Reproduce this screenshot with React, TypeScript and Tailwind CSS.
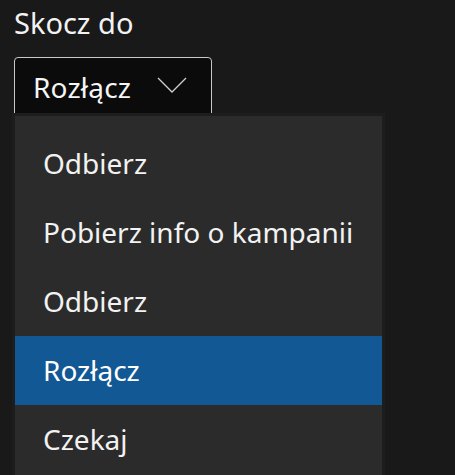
import React from "react";

const items = ["Odbierz", "Pobierz info o kampanii", "Odbierz", "Rozłącz", "Czekaj"];

function Chevron() {
  return (
    <svg width="30" height="16" viewBox="0 0 30 16" fill="none">
      <path d="M1 1 L15 15 L29 1" stroke="#d0d0d0" strokeWidth="1.3" />
    </svg>
  );
}

export default function App() {
  const selected = 3;
  return (
    <div
      className="w-[455px] h-[475px] bg-[#191919] text-white overflow-hidden relative"
      style={{ fontFamily: '"Noto Sans", "Open Sans", sans-serif' }}
    >
      <div className="pl-[14px] pt-[3px]">
        <p className="text-[29px] leading-[40px] text-[#f2f2f2]">Skocz do</p>
        <div className="mt-[14px] w-[198px] h-[70px] border border-[#c8c8c8] rounded-t-[4px] bg-[#0b0b0b] flex items-start pt-[10px] pl-[18px] gap-[26px]">
          <span className="text-[28px] leading-[38px] text-[#f5f5f5] tracking-[0.2px]">Rozłącz</span>
          <span className="mt-[9px]">
            <Chevron />
          </span>
        </div>
      </div>

      <div className="absolute left-[15px] top-[116px] w-[367px] h-[380px] bg-[#2b2b2b] pt-[13px] shadow-[0_0_0_3px_#1d1d1d]">
        {items.map((label, i) => (
          <div
            key={i}
            className={
              i === selected
                ? "h-[69px] flex items-center pl-[28px] pb-[2px] bg-[#125894] text-[28px] text-white"
                : "h-[69px] flex items-center pl-[28px] pb-[2px] text-[28px] text-[#f2f2f2]"
            }
          >
            {label}
          </div>
        ))}
      </div>
    </div>
  );
}
